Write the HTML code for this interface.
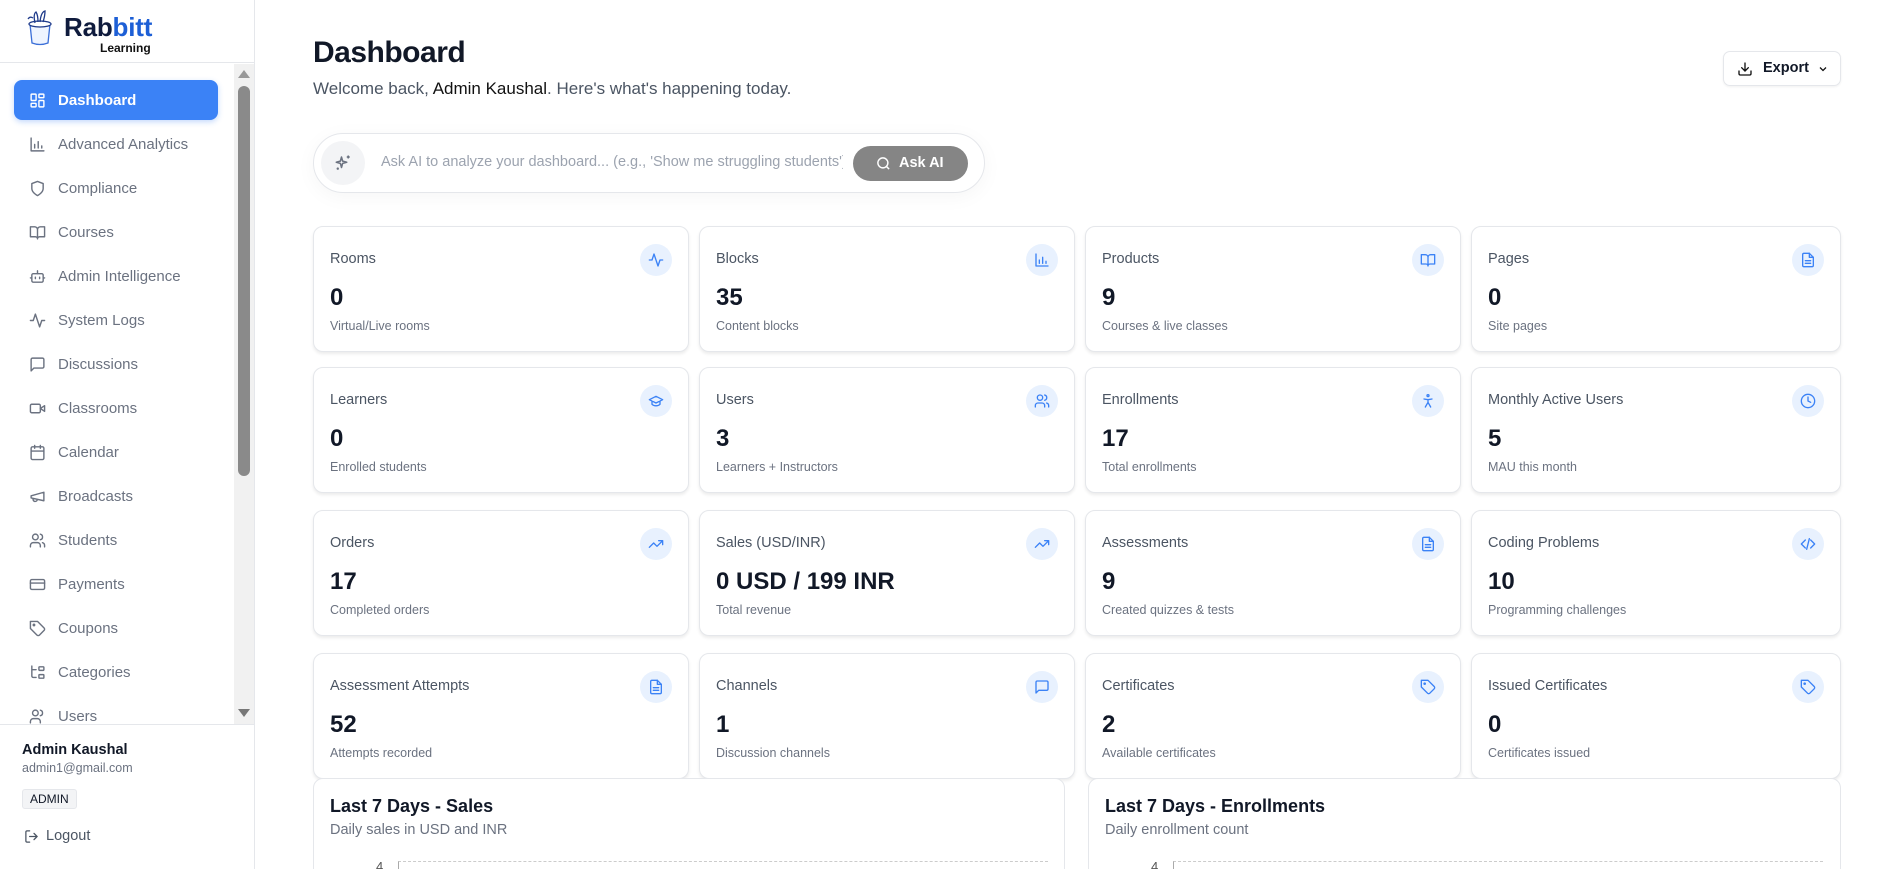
<!DOCTYPE html>
<html style="width:1895px;height:869px;overflow:hidden"><head><meta charset="utf-8"><style>
*{box-sizing:border-box;margin:0;padding:0}
body{width:1895px;height:869px;overflow:hidden;font-family:"Liberation Sans",sans-serif;background:#fff;color:#111827}
#wrap{position:relative;width:1895px;height:869px;overflow:hidden}
.sb{position:absolute;left:0;top:0;width:255px;height:869px;border-right:1px solid #e5e7eb;background:#fff}
.logo{height:63px;border-bottom:1px solid #e5e7eb;position:relative}
.nav{position:absolute;left:0;top:64px;width:254px;height:660px;overflow:hidden}
.track{position:absolute;left:234px;top:0;width:20px;height:660px;background:#f1f1f1}
.thumb{position:absolute;left:238px;top:22px;width:12px;height:390px;background:#8a8a8a;border-radius:6px}
.item{position:absolute;left:14px;width:204px;height:40px;display:flex;align-items:center;font-size:15px;color:#6b7280}
.item svg{position:absolute;left:15px;width:17px;height:17px;stroke:#6b7280;fill:none;stroke-width:2;stroke-linecap:round;stroke-linejoin:round}
.item span{position:absolute;left:44px}
.item.act{background:#3b82f6;color:#fff;border-radius:8px;box-shadow:0 2px 6px rgba(59,130,246,.3);font-weight:bold}
.item.act svg{stroke:#fff}
.foot{position:absolute;left:0;top:724px;width:254px;border-top:1px solid #e5e7eb;height:145px}
.main{position:absolute;left:255px;top:0;width:1640px;height:869px;overflow:hidden}
.card{position:absolute;width:376px;height:126px;border:1px solid #e5e7eb;border-radius:10px;background:#fff;box-shadow:0 2px 3px rgba(0,0,0,.08)}
.card .t{position:absolute;left:16px;top:24px;font-size:14.5px;color:#4b5563}
.card .n{position:absolute;left:16px;top:57px;font-size:24px;font-weight:bold;color:#111827}
.card .s{position:absolute;left:16px;top:92px;font-size:12.5px;color:#6b7280}
.card .ic{position:absolute;right:16px;top:17px;width:32px;height:32px;border-radius:50%;background:#e8f1fe;display:flex;align-items:center;justify-content:center}
.card .ic svg{width:16px;height:16px;stroke:#3b82f6;fill:none;stroke-width:2;stroke-linecap:round;stroke-linejoin:round}
.chart{position:absolute;top:778px;height:130px;border:1px solid #e5e7eb;border-radius:10px;background:#fff}
.chart h3{position:absolute;left:16px;top:17px;font-size:18px;font-weight:bold}
.chart p{position:absolute;left:16px;top:43px;font-size:14.5px;color:#6b7280}
</style></head><body><div id="wrap">
<div class="sb">
 <div class="logo">
  <svg style="position:absolute;left:24px;top:10px" width="32" height="36" viewBox="0 0 32 36" fill="none" stroke="#1e3a8a" stroke-width="1.3"><path d="M6 14 L8 33 Q16 36 24 33 L26 14 Z" fill="#eef4ff" stroke="#3b6fd8"/><ellipse cx="16" cy="14" rx="11" ry="3" fill="#fff"/><path d="M11 13 Q9 4 12 2 Q14 5 14 12"/><path d="M16 12 Q17 2 21 1 Q21 6 19 12"/><path d="M4 9 Q6 6 9 8"/></svg>
  <div style="position:absolute;left:64px;top:12px;font-size:26px;font-weight:bold;letter-spacing:-.2px;color:#0f1b3d">Rab<span style="color:#1d5fd6">bitt</span></div>
  <div style="position:absolute;left:100px;top:41px;font-size:12px;font-weight:bold;color:#111">Learning</div>
 </div>
 <div class="nav">
  <div class="track"></div>
  <div style="position:absolute;left:238px;top:6px;width:0;height:0;border-left:6px solid transparent;border-right:6px solid transparent;border-bottom:8px solid #999"></div>
  <div class="thumb"></div>
  <div style="position:absolute;left:238px;top:645px;width:0;height:0;border-left:6px solid transparent;border-right:6px solid transparent;border-top:8px solid #777"></div>

  <div class="item act" style="top:16px"><svg viewBox="0 0 24 24"><rect x="3" y="3" width="7" height="9" rx="1"/><rect x="14" y="3" width="7" height="5" rx="1"/><rect x="14" y="12" width="7" height="9" rx="1"/><rect x="3" y="16" width="7" height="5" rx="1"/></svg><span>Dashboard</span></div>
  <div class="item" style="top:60px"><svg viewBox="0 0 24 24"><path d="M3 3v18h18M8 17v-5M13 17V8M18 17v-3"/></svg><span>Advanced Analytics</span></div>
  <div class="item" style="top:104px"><svg viewBox="0 0 24 24"><path d="M12 22s8-4 8-10V5l-8-3-8 3v7c0 6 8 10 8 10z"/></svg><span>Compliance</span></div>
  <div class="item" style="top:148px"><svg viewBox="0 0 24 24"><path d="M2 4h6a4 4 0 0 1 4 4v13a3 3 0 0 0-3-3H2zM22 4h-6a4 4 0 0 0-4 4v13a3 3 0 0 1 3-3h7z"/></svg><span>Courses</span></div>
  <div class="item" style="top:192px"><svg viewBox="0 0 24 24"><rect x="4" y="8" width="16" height="12" rx="2"/><path d="M12 8V4M2 14h2M20 14h2M9 13v2M15 13v2"/></svg><span>Admin Intelligence</span></div>
  <div class="item" style="top:236px"><svg viewBox="0 0 24 24"><path d="M22 12h-4l-3 9L9 3l-3 9H2"/></svg><span>System Logs</span></div>
  <div class="item" style="top:280px"><svg viewBox="0 0 24 24"><path d="M21 15a2 2 0 0 1-2 2H7l-4 4V5a2 2 0 0 1 2-2h14a2 2 0 0 1 2 2z"/></svg><span>Discussions</span></div>
  <div class="item" style="top:324px"><svg viewBox="0 0 24 24"><rect x="2" y="6" width="14" height="12" rx="2"/><path d="M22 8l-6 4 6 4z"/></svg><span>Classrooms</span></div>
  <div class="item" style="top:368px"><svg viewBox="0 0 24 24"><rect x="3" y="4" width="18" height="18" rx="2"/><path d="M16 2v4M8 2v4M3 10h18"/></svg><span>Calendar</span></div>
  <div class="item" style="top:412px"><svg viewBox="0 0 24 24"><path d="M3 11l18-5v12L3 14zM11.6 16.8a3 3 0 1 1-5.8-1.6"/></svg><span>Broadcasts</span></div>
  <div class="item" style="top:456px"><svg viewBox="0 0 24 24"><circle cx="9" cy="7" r="4"/><path d="M2 21v-2a4 4 0 0 1 4-4h6a4 4 0 0 1 4 4v2M16 3.1a4 4 0 0 1 0 7.8M22 21v-2a4 4 0 0 0-3-3.9"/></svg><span>Students</span></div>
  <div class="item" style="top:500px"><svg viewBox="0 0 24 24"><rect x="2" y="5" width="20" height="14" rx="2"/><path d="M2 10h20"/></svg><span>Payments</span></div>
  <div class="item" style="top:544px"><svg viewBox="0 0 24 24"><path d="M12 2H2v10l9.3 9.3a2.4 2.4 0 0 0 3.4 0l6.6-6.6a2.4 2.4 0 0 0 0-3.4z"/><circle cx="7" cy="7" r="1"/></svg><span>Coupons</span></div>
  <div class="item" style="top:588px"><svg viewBox="0 0 24 24"><path d="M4 3v14a2 2 0 0 0 2 2h4M4 8h6"/><rect x="14" y="4" width="7" height="5" rx="1"/><rect x="14" y="15" width="7" height="5" rx="1"/></svg><span>Categories</span></div>
  <div class="item" style="top:632px"><svg viewBox="0 0 24 24"><circle cx="9" cy="7" r="4"/><path d="M2 21v-2a4 4 0 0 1 4-4h6a4 4 0 0 1 4 4v2M16 3.1a4 4 0 0 1 0 7.8"/></svg><span>Users</span></div>
 </div>
 <div class="foot">
  <div style="position:absolute;left:22px;top:17px;font-size:14.5px;font-weight:bold">Admin Kaushal</div>
  <div style="position:absolute;left:22px;top:36px;font-size:12.5px;color:#6b7280">admin1@gmail.com</div>
  <div style="position:absolute;left:22px;top:64px;height:20px;padding:0 7px;font-size:12px;line-height:19px;border:1px solid #e5e7eb;background:#f3f4f6;border-radius:3px">ADMIN</div>
  <svg style="position:absolute;left:24px;top:104px" width="15" height="15" viewBox="0 0 24 24" fill="none" stroke="#4b5563" stroke-width="2" stroke-linecap="round"><path d="M9 21H5a2 2 0 0 1-2-2V5a2 2 0 0 1 2-2h4M16 17l5-5-5-5M21 12H9"/></svg>
  <div style="position:absolute;left:46px;top:103px;font-size:14.5px;color:#4b5563">Logout</div>
 </div>
</div>

<div class="main">
 <div style="position:absolute;left:58px;top:36px;font-size:30px;font-weight:bold;letter-spacing:-.5px">Dashboard</div>
 <div style="position:absolute;left:58px;top:79px;font-size:17px;color:#4b5563">Welcome back, <span style="color:#111">Admin Kaushal</span>. Here's what's happening today.</div>
 <div style="position:absolute;left:1468px;top:51px;width:118px;height:35px;border:1px solid #e5e7eb;border-radius:7px;box-shadow:0 1px 2px rgba(0,0,0,.06);font-size:14.5px;font-weight:bold">
  <svg style="position:absolute;left:13px;top:9px" width="16" height="16" viewBox="0 0 24 24" fill="none" stroke="#111" stroke-width="2" stroke-linecap="round"><path d="M21 15v4a2 2 0 0 1-2 2H5a2 2 0 0 1-2-2v-4M7 10l5 5 5-5M12 15V3"/></svg>
  <span style="position:absolute;left:39px;top:8px">Export</span>
  <svg style="position:absolute;left:93px;top:11px" width="12" height="12" viewBox="0 0 24 24" fill="none" stroke="#111" stroke-width="2.5"><path d="M6 9l6 6 6-6"/></svg>
 </div>
 <div style="position:absolute;left:58px;top:133px;width:672px;height:60px;border:1px solid #e5e7eb;border-radius:30px;box-shadow:0 4px 20px rgba(0,0,0,.04)">
  <div style="position:absolute;left:7px;top:7px;width:44px;height:44px;border-radius:50%;background:#f3f4f6"></div>
  <svg style="position:absolute;left:20px;top:20px" width="18" height="18" viewBox="0 0 24 24" fill="none" stroke="#6b7280" stroke-width="2" stroke-linejoin="round"><path d="M10 4l1.5 5.5L17 11l-5.5 1.5L10 18l-1.5-5.5L3 11l5.5-1.5z"/><path d="M19 2v4M17 4h4M5 18v3M3.5 19.5h3"/></svg>
  <div style="position:absolute;left:67px;top:20px;font-size:14.5px;color:#9ca3af;white-space:nowrap;width:462px;overflow:hidden">Ask AI to analyze your dashboard... (e.g., 'Show me struggling students')</div>
  <div style="position:absolute;left:539px;top:12px;width:115px;height:35px;border-radius:18px;background:#858585;color:#fff;font-size:14.5px;font-weight:bold">
   <svg style="position:absolute;left:23px;top:10px" width="15" height="15" viewBox="0 0 24 24" fill="none" stroke="#fff" stroke-width="2.3"><circle cx="11" cy="11" r="8"/><path d="M21 21l-4.3-4.3"/></svg>
   <span style="position:absolute;left:46px;top:9px">Ask AI</span>
  </div>
 </div>

 <div class="card" style="left:58px;top:226px"><div class="t">Rooms</div><div class="n">0</div><div class="s">Virtual/Live rooms</div><div class="ic"><svg viewBox="0 0 24 24"><path d="M22 12h-4l-3 9L9 3l-3 9H2"/></svg></div></div>
 <div class="card" style="left:444px;top:226px"><div class="t">Blocks</div><div class="n">35</div><div class="s">Content blocks</div><div class="ic"><svg viewBox="0 0 24 24"><path d="M3 3v18h18M8 17v-5M13 17V8M18 17v-3"/></svg></div></div>
 <div class="card" style="left:830px;top:226px"><div class="t">Products</div><div class="n">9</div><div class="s">Courses &amp; live classes</div><div class="ic"><svg viewBox="0 0 24 24"><path d="M2 4h6a4 4 0 0 1 4 4v13a3 3 0 0 0-3-3H2zM22 4h-6a4 4 0 0 0-4 4v13a3 3 0 0 1 3-3h7z"/></svg></div></div>
 <div class="card" style="left:1216px;top:226px;width:370px"><div class="t">Pages</div><div class="n">0</div><div class="s">Site pages</div><div class="ic"><svg viewBox="0 0 24 24"><path d="M14 2H6a2 2 0 0 0-2 2v16a2 2 0 0 0 2 2h12a2 2 0 0 0 2-2V8z"/><path d="M14 2v6h6M16 13H8M16 17H8"/></svg></div></div>

 <div class="card" style="left:58px;top:367px"><div class="t">Learners</div><div class="n">0</div><div class="s">Enrolled students</div><div class="ic"><svg viewBox="0 0 24 24"><path d="M22 10L12 5 2 10l10 5 10-5zM6 12v5c3 3 9 3 12 0v-5"/></svg></div></div>
 <div class="card" style="left:444px;top:367px"><div class="t">Users</div><div class="n">3</div><div class="s">Learners + Instructors</div><div class="ic"><svg viewBox="0 0 24 24"><circle cx="9" cy="7" r="4"/><path d="M2 21v-2a4 4 0 0 1 4-4h6a4 4 0 0 1 4 4v2M16 3.1a4 4 0 0 1 0 7.8M22 21v-2a4 4 0 0 0-3-3.9"/></svg></div></div>
 <div class="card" style="left:830px;top:367px"><div class="t">Enrollments</div><div class="n">17</div><div class="s">Total enrollments</div><div class="ic"><svg viewBox="0 0 24 24"><circle cx="12" cy="4" r="1.5"/><path d="M6 9l6 1 6-1M12 10v4l-4 7M12 14l4 7"/></svg></div></div>
 <div class="card" style="left:1216px;top:367px;width:370px"><div class="t">Monthly Active Users</div><div class="n">5</div><div class="s">MAU this month</div><div class="ic"><svg viewBox="0 0 24 24"><circle cx="12" cy="12" r="10"/><path d="M12 6v6l4 2"/></svg></div></div>

 <div class="card" style="left:58px;top:510px"><div class="t">Orders</div><div class="n">17</div><div class="s">Completed orders</div><div class="ic"><svg viewBox="0 0 24 24"><path d="M22 7l-8.5 8.5-5-5L2 17M16 7h6v6"/></svg></div></div>
 <div class="card" style="left:444px;top:510px"><div class="t">Sales (USD/INR)</div><div class="n">0 USD / 199 INR</div><div class="s">Total revenue</div><div class="ic"><svg viewBox="0 0 24 24"><path d="M22 7l-8.5 8.5-5-5L2 17M16 7h6v6"/></svg></div></div>
 <div class="card" style="left:830px;top:510px"><div class="t">Assessments</div><div class="n">9</div><div class="s">Created quizzes &amp; tests</div><div class="ic"><svg viewBox="0 0 24 24"><path d="M14 2H6a2 2 0 0 0-2 2v16a2 2 0 0 0 2 2h12a2 2 0 0 0 2-2V8z"/><path d="M14 2v6h6M16 13H8M16 17H8"/></svg></div></div>
 <div class="card" style="left:1216px;top:510px;width:370px"><div class="t">Coding Problems</div><div class="n">10</div><div class="s">Programming challenges</div><div class="ic"><svg viewBox="0 0 24 24"><path d="M16 18l6-6-6-6M8 6l-6 6 6 6M14 4l-4 16"/></svg></div></div>

 <div class="card" style="left:58px;top:653px"><div class="t">Assessment Attempts</div><div class="n">52</div><div class="s">Attempts recorded</div><div class="ic"><svg viewBox="0 0 24 24"><path d="M14 2H6a2 2 0 0 0-2 2v16a2 2 0 0 0 2 2h12a2 2 0 0 0 2-2V8z"/><path d="M14 2v6h6M16 13H8M16 17H8"/></svg></div></div>
 <div class="card" style="left:444px;top:653px"><div class="t">Channels</div><div class="n">1</div><div class="s">Discussion channels</div><div class="ic"><svg viewBox="0 0 24 24"><path d="M21 15a2 2 0 0 1-2 2H7l-4 4V5a2 2 0 0 1 2-2h14a2 2 0 0 1 2 2z"/></svg></div></div>
 <div class="card" style="left:830px;top:653px"><div class="t">Certificates</div><div class="n">2</div><div class="s">Available certificates</div><div class="ic"><svg viewBox="0 0 24 24"><path d="M12 2H2v10l9.3 9.3a2.4 2.4 0 0 0 3.4 0l6.6-6.6a2.4 2.4 0 0 0 0-3.4z"/><circle cx="7" cy="7" r="1"/></svg></div></div>
 <div class="card" style="left:1216px;top:653px;width:370px"><div class="t">Issued Certificates</div><div class="n">0</div><div class="s">Certificates issued</div><div class="ic"><svg viewBox="0 0 24 24"><path d="M12 2H2v10l9.3 9.3a2.4 2.4 0 0 0 3.4 0l6.6-6.6a2.4 2.4 0 0 0 0-3.4z"/><circle cx="7" cy="7" r="1"/></svg></div></div>

 <div class="chart" style="left:58px;width:752px"><h3>Last 7 Days - Sales</h3><p>Daily sales in USD and INR</p>
  <div style="position:absolute;left:62px;top:80px;font-size:13px;color:#555">4</div>
  <div style="position:absolute;left:84px;top:82px;width:650px;border-top:1px dashed #ccc;height:40px;border-left:1px solid #aaa"></div></div>
 <div class="chart" style="left:833px;width:753px"><h3>Last 7 Days - Enrollments</h3><p>Daily enrollment count</p>
  <div style="position:absolute;left:62px;top:80px;font-size:13px;color:#555">4</div>
  <div style="position:absolute;left:84px;top:82px;width:650px;border-top:1px dashed #ccc;height:40px;border-left:1px solid #aaa"></div></div>
</div>
</div></body></html>
